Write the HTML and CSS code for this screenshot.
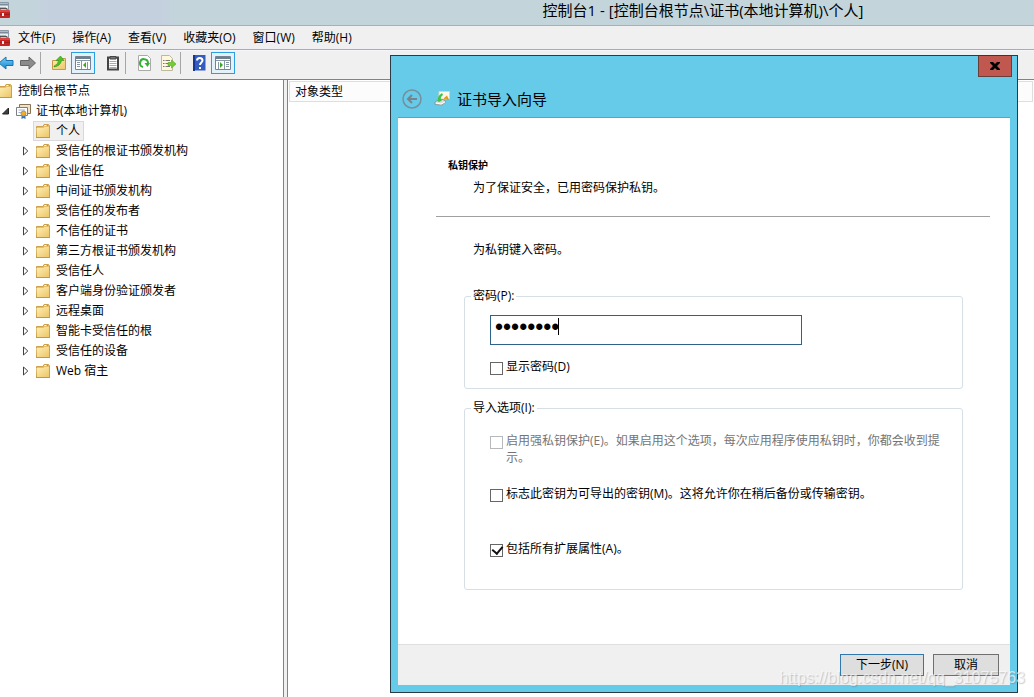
FILE: index.html
```
<!DOCTYPE html>
<html lang="zh-CN">
<head>
<meta charset="utf-8">
<title>控制台1</title>
<link rel="stylesheet" href="styles.css">
</head>
<body>
<svg class="defs" aria-hidden="true">
  <defs>
    <linearGradient id="gold" x1="0" y1="0" x2="1" y2="1"><stop offset="0" stop-color="#fff0b4"/><stop offset="1" stop-color="#ecc569"/></linearGradient>
    <linearGradient id="blue" x1="0" y1="0" x2="0" y2="1"><stop offset="0" stop-color="#7fd0f5"/><stop offset="1" stop-color="#1187d0"/></linearGradient>
    <symbol id="folder" viewBox="0 0 16 16">
      <path d="M1.5 3.5H8L9 1.5H13.5L14.5 3V14.5H1.5Z" fill="#e5bf6c" stroke="#cda04c"/>
      <path d="M9.5 2.5H13" stroke="#fff"/><path d="M11.5 2.5H13" stroke="#6ba5d8"/>
      <path d="M1.5 5H8.5L9.5 4H14V14H2Z" fill="url(#gold)"/>
      <path d="M1 14.5H15" stroke="#c5953f"/>
    </symbol>
    <symbol id="closed" viewBox="0 0 8 10"><path d="M1.5 1V9L5.800 5Z" fill="#fff" stroke="#404040"/></symbol>
    <symbol id="toolbox" viewBox="0 0 16 18">
      <path d="M0 1.5H13.5V9H0" fill="#e9eef2" stroke="#8b98a5"/><path d="M0 3.5H13" stroke="#7c8b99" stroke-width="2"/><path d="M0 6.5H11" stroke="#a9b4bd"/>
      <path d="M5 9V7.5H12V9" fill="none" stroke="#555"/><rect x="0" y="9" width="15" height="8" rx="1" fill="#c62222"/><path d="M0 10H15" stroke="#e76a61"/><path d="M0 13.5H15" stroke="#a51a1a"/><rect x="7" y="12" width="2" height="3" fill="#eee"/>
    </symbol>
    <symbol id="cert" viewBox="0 0 16 16">
      <path d="M4.500 1.500H15.500V10.500H4.500Z" fill="#eee3cf" stroke="#8b7355"/>
      <path d="M1.500 4.500H12.500V12.500H1.500Z" fill="#fff" stroke="#7e7d80"/>
      <path d="M3.500 7H10M3.500 9.500H7" stroke="#8fb4df"/>
      <path d="M6.500 12V16L8.500 15L10.500 16V12" fill="#2873ce"/><circle cx="8.500" cy="10.500" r="2.500" fill="#efae2b" stroke="#d58c1b"/>
    </symbol>
  </defs>
</svg>
<div class="console">
  <header class="titlebar">
    <svg class="appicon" viewBox="0 0 16 18"><use href="#toolbox"/></svg>
    <h1 class="console-title">控制台1 - [控制台根节点\证书(本地计算机)\个人]</h1>
  </header>
  <nav class="menubar">
    <svg class="appicon" viewBox="0 0 16 18"><use href="#toolbox"/></svg>
    <button>文件(F)</button><button>操作(A)</button><button>查看(V)</button><button>收藏夹(O)</button><button>窗口(W)</button><button>帮助(H)</button>
  </nav>
  <div class="toolbar">
    <button class="tool tool-back" aria-label="后退"><svg viewBox="0 0 16 16"><path d="M1 8L8 2V5.500H15V10.500H8V14Z" fill="url(#blue)" stroke="#1874b0"/></svg></button>
    <button class="tool" aria-label="前进"><svg viewBox="0 0 16 16"><path d="M15.500 8L9 2V5.500H.5V10.500H9V14Z" fill="#8b8b8b" stroke="#666"/></svg></button>
    <span class="separator"></span>
    <button class="tool" aria-label="上移一级"><svg viewBox="0 0 16 16"><path d="M1.500 5.500H8L9 3.500H14.500V14.500H1.500Z" fill="url(#gold)" stroke="#c99a45"/><path d="M3 11Q7 10 7.500 5.500H5L9.500 1L13 5.500H10.500Q9.500 11 3 12Z" fill="#4cc223" stroke="#2f8e17" stroke-width=".6"/></svg></button>
    <button class="tool tool-on" aria-label="显示/隐藏控制台树"><svg viewBox="0 0 16 16"><path d="M.5 1.500H15.500V14.500H.5Z" fill="#fff" stroke="#758493"/><path d="M1 3H15" stroke="#71808e" stroke-width="2"/><path d="M1 5.500H15M6.500 6V14M2 7.500H5M2 9.500H5M2 11.500H5M12.500 7V14" stroke="#8998a5"/><path d="M8 10L11 7V13Z" fill="#39a923"/></svg></button>
    <span class="gap"></span>
    <button class="tool" aria-label="剪贴板"><svg viewBox="0 0 16 16"><path d="M3 2.500H13V14.500H3Z" fill="#fff" stroke="#444" stroke-width="2"/><path d="M5 1.500H11V4H5Z" fill="#777" stroke="#444"/><path d="M4.500 6.500H11.500M4.500 8.500H11.500M4.500 10.500H11.500M4.500 12.500H11.500" stroke="#aaa"/></svg></button>
    <span class="separator"></span>
    <button class="tool" aria-label="刷新"><svg viewBox="0 0 16 16"><path d="M2.500.5H11.500L14.500 3.500V15.500H2.500Z" fill="#fff" stroke="#aaa"/><path d="M7 12A4 4 0 1 1 12 8" fill="none" stroke="#36ae38" stroke-width="2"/><path d="M8.500 8H14L11.500 12Z" fill="#36ae38"/></svg></button>
    <button class="tool" aria-label="导出列表"><svg viewBox="0 0 16 16"><path d="M1.500.5H9.500L12.500 3.500V15.500H1.500Z" fill="#fff8dc" stroke="#bdb99f"/><path d="M3 5.500H4.500M5.500 5.500H10M3 8.500H4.500M5.500 8.500H9M3 11.500H4.500M5.500 11.500H10" stroke="#777"/><path d="M8 7.500H11.500V5L16 9L11.500 13V10.500H8Z" fill="#76cc35" stroke="#50a51c" stroke-width=".6"/></svg></button>
    <span class="separator"></span>
    <button class="tool" aria-label="帮助"><svg viewBox="0 0 16 16"><path d="M2 0H14.500V15.500H2Z" fill="#345bc0"/><path d="M2 0H4V16H2Z" fill="#163894"/><path d="M6 5.500C6 2 11.500 2 11.500 5.500C11.500 7.500 9 7.500 9 10M9 12V14" stroke="#fff" stroke-width="2" fill="none"/></svg></button>
    <button class="tool tool-on" aria-label="显示/隐藏操作窗格"><svg viewBox="0 0 16 16"><path d="M.5 1.500H15.500V14.500H.5Z" fill="#fff" stroke="#758493"/><path d="M1 3H15" stroke="#71808e" stroke-width="2"/><path d="M1 5.500H15M9.500 6V14M11 7.500H14M11 9.500H14M11 11.500H14M3.500 7V14" stroke="#8998a5"/><path d="M8 10L5 7V13Z" fill="#39a923"/></svg></button>
  </div>
  <main class="panes">
    <ul class="tree">
      <li class="node root"><svg class="icon"><use href="#folder"/></svg>控制台根节点</li>
      <li class="node store"><svg class="twisty" viewBox="0 0 8 10"><path d="M6.500 2V8H.5Z" fill="#404040" stroke="#222"/></svg><svg class="icon"><use href="#cert"/></svg>证书(本地计算机)</li>
      <li class="node leaf"><span class="selected"><svg class="icon"><use href="#folder"/></svg>个人</span></li>
      <li class="node child"><svg class="twisty"><use href="#closed"/></svg><svg class="icon"><use href="#folder"/></svg>受信任的根证书颁发机构</li>
      <li class="node child"><svg class="twisty"><use href="#closed"/></svg><svg class="icon"><use href="#folder"/></svg>企业信任</li>
      <li class="node child"><svg class="twisty"><use href="#closed"/></svg><svg class="icon"><use href="#folder"/></svg>中间证书颁发机构</li>
      <li class="node child"><svg class="twisty"><use href="#closed"/></svg><svg class="icon"><use href="#folder"/></svg>受信任的发布者</li>
      <li class="node child"><svg class="twisty"><use href="#closed"/></svg><svg class="icon"><use href="#folder"/></svg>不信任的证书</li>
      <li class="node child"><svg class="twisty"><use href="#closed"/></svg><svg class="icon"><use href="#folder"/></svg>第三方根证书颁发机构</li>
      <li class="node child"><svg class="twisty"><use href="#closed"/></svg><svg class="icon"><use href="#folder"/></svg>受信任人</li>
      <li class="node child"><svg class="twisty"><use href="#closed"/></svg><svg class="icon"><use href="#folder"/></svg>客户端身份验证颁发者</li>
      <li class="node child"><svg class="twisty"><use href="#closed"/></svg><svg class="icon"><use href="#folder"/></svg>远程桌面</li>
      <li class="node child"><svg class="twisty"><use href="#closed"/></svg><svg class="icon"><use href="#folder"/></svg>智能卡受信任的根</li>
      <li class="node child"><svg class="twisty"><use href="#closed"/></svg><svg class="icon"><use href="#folder"/></svg>受信任的设备</li>
      <li class="node child"><svg class="twisty"><use href="#closed"/></svg><svg class="icon"><use href="#folder"/></svg>Web 宿主</li>
    </ul>
    <section class="list"><div class="list-head">对象类型</div></section>
  </main>
</div>

<form class="dialog" role="dialog" aria-labelledby="wizard-title">
  <div class="dialog-controls"><button type="button" class="close" aria-label="关闭"><svg viewBox="0 0 10 8"><path d="M0 0H3L5 2L7 0H10V1L7 4L10 7V8H7L5 6L3 8H0V7L3 4L0 1Z"/></svg></button></div>
  <div class="dialog-head">
    <button type="button" class="back" aria-label="上一步"><svg viewBox="0 0 20 20"><circle cx="10" cy="10" r="9" fill="none" stroke="#74909d" stroke-width="1.500"/><path d="M15 10H6M10 6L6 10L10 14" fill="none" stroke="#74858e" stroke-width="2"/></svg></button>
    <svg class="icon" viewBox="0 0 16 16"><path d="M5 .5H15.500V8H5Z" fill="#fff8e8" stroke="#ddd2bd"/><path d="M10 7L13 4.500L15 9H13L12 7.500L10.500 9Z" fill="#df9b18"/><path d="M1 11L5 8.500H9L12 10.500L8 14L1 13.500Z" fill="#d7dddb" stroke="#89918d" stroke-width=".8"/><path d="M2 12L7 13L11 11" stroke="#fff" fill="none"/><path d="M4 10Q3 5 8 2L9 4Q6 6 7 8.500L8 9.500L5 11L2 9.500Z" fill="#3fc247"/></svg>
    <h2 id="wizard-title">证书导入向导</h2>
  </div>
  <div class="page">
    <h3 class="page-title">私钥保护</h3>
    <p class="indent">为了保证安全，已用密码保护私钥。</p>
    <hr>
    <p class="indent">为私钥键入密码。</p>
    <fieldset class="group password-group">
      <legend><label for="password">密码(P):</label></legend>
      <div class="field"><input id="password" class="password" type="password" value="password"><span class="caret"></span></div>
      <label class="option"><input type="checkbox"><span>显示密码(D)</span></label>
    </fieldset>
    <fieldset class="group options-group">
      <legend>导入选项(I):</legend>
      <label class="option disabled"><input type="checkbox" disabled><span>启用强私钥保护(E)。如果启用这个选项，每次应用程序使用私钥时，你都会收到提示。</span></label>
      <label class="option"><input type="checkbox"><span>标志此密钥为可导出的密钥(M)。这将允许你在稍后备份或传输密钥。</span></label>
      <label class="option last"><input type="checkbox" checked><span>包括所有扩展属性(A)。</span></label>
    </fieldset>
  </div>
  <footer class="actions"><button type="button" class="push primary">下一步(N)</button><button type="button" class="push">取消</button></footer>
</form>
<div class="watermark">https://blog.csdn.net/qq_31075763</div>
</body>
</html>
```
FILE: styles.css
```
* { box-sizing: border-box; }
body, h1, h2, h3, p, ul { margin: 0; padding: 0; }
body {
  position: relative;
  overflow: hidden;
  background: #fff;
  color: #000;
  font: 12px/20px "Open Sans", "Noto Sans CJK SC", sans-serif;
}
button, input { font: inherit; color: inherit; }
button { border: 0; padding: 0; background: none; white-space: nowrap; }
svg { display: block; flex: none; }
.defs { position: absolute; width: 0; height: 0; }
.console { display: flex; flex-direction: column; min-height: 100vh; }

.titlebar {
  display: flex;
  align-items: center;
  height: 26px;
  padding-bottom: 5px;
  background: linear-gradient(90deg, #c3d5db 30px, #c5d0df 50px, #c5d0df 160px, #c3d5db 180px);
  border-bottom: 1px solid #a5b0ba;
}
.appicon { width: 16px; height: 18px; margin-left: -5px; }
.console-title { flex: 1; padding-left: 361px; text-align: center; font-size: 15px; font-weight: 400; }
.menubar {
  display: flex;
  align-items: center;
  gap: 17px;
  height: 24px;
  background: #f0f0f0;
  border-bottom: 1px solid #a9aab5;
}
.menubar .appicon { margin-right: -10px; }
.toolbar {
  display: flex;
  align-items: center;
  height: 30px;
  padding-bottom: 5px;
  background: #f0f0f0;
  border-top: 1px solid #f5f6fc;
  border-bottom: 1px solid #81818c;
}
.tool { display: grid; place-items: center; width: 24px; height: 22px; }
.tool svg { width: 16px; height: 16px; }
.tool-back { width: 20px; margin-left: -4px; }
.tool-on { background: #e3f1fb; border: 1px solid #2c9ee2; }
.separator { width: 1px; height: 22px; margin-right: 6px; background: #a6a6a6; }
.gap { width: 6px; }

.panes { display: flex; flex: 1; background: #f0f0f0; }
.tree { flex: 0 0 284px; padding-top: 1px; background: #fff; border-right: 1px solid #81818c; list-style: none; }
.node { display: flex; align-items: center; height: 20px; gap: 5px; }
.icon { width: 16px; height: 16px; }
.twisty { width: 8px; height: 10px; }
.root { margin-left: -3px; }
.store { padding-left: 2px; }
.leaf { padding-left: 33px; }
.child { padding-left: 22px; }
.selected { display: flex; align-items: center; gap: 5px; height: 20px; padding: 0 3px 0 1px; background: #f0f0f0; border: 1px solid #d9d9d9; }
.list { flex: 1; margin-left: 3px; padding: 1px; background: #fff; border-left: 1px solid #81818c; }
.list-head { height: 21px; padding-left: 5px; background: #fcfcfc; border: 1px solid #dedede; }

.dialog {
  position: absolute;
  top: 55px;
  left: 390px;
  right: 16px;
  padding: 0 7px 7px;
  background: #66cae9;
  border: 1px solid #293b44;
}
.dialog-controls { display: flex; justify-content: flex-end; height: 27px; margin-right: -2px; }
.close { display: grid; place-items: center; width: 34px; height: 21px; background: #c1584f; border: 1px solid #663f3b; border-top: 0; }
.close svg { width: 10px; height: 8px; }
.dialog-head { display: flex; align-items: center; height: 35px; padding: 0 0 2px 4px; border-bottom: 1px solid #6e9cb4; }
.dialog-head h2 { margin-left: 7px; font-size: 15px; font-weight: 400; }
.back { width: 20px; height: 20px; margin-right: 12px; }
.page { padding: 37px 47px 54px 66px; background: #fff; }
.page-title { margin-left: -16px; font-size: 10px; font-weight: 700; }
.indent { margin: 3px 0 0 9px; }
hr { height: 1px; margin: 18px -27px 23px -28px; border: 0; background: #a0a0a0; }
.group { min-width: 0; margin: 0; border: 1px solid #d5dfe5; border-radius: 3px; }
legend { margin-left: -19px; padding: 0 2px; line-height: 16px; }
.password-group { margin-top: 28px; padding: 11px 11px 13px 25px; }
.options-group { margin-top: 11px; padding: 16px 11px 32px 25px; }
.field { position: relative; max-width: 312px; margin-bottom: 13px; }
.password { display: block; width: 100%; height: 30px; padding: 0 4px 6px; border: 1px solid #2d628b; border-radius: 0; outline: 0; background: #fff; font: 23px/22px "Liberation Sans", sans-serif; }
.caret { position: absolute; top: 3px; left: 68px; width: 1px; height: 17px; background: #000; }
.option { display: flex; align-items: flex-start; gap: 3px; line-height: 17px; }
.option input { appearance: none; flex: none; display: grid; place-items: center; width: 13px; height: 13px; margin: 4px 0 0; border: 1px solid #666; background: #fff; }
.option input:checked::after { content: ""; width: 5px; height: 8px; margin: -3px 0 0 1px; border: solid #111; border-width: 0 2px 2px 0; transform: rotate(40deg); }
.option + .option { margin-top: 19px; }
.option + .last { margin-top: 38px; }
.disabled { color: #757575; }
.disabled input { border-color: #b5b9bb; }
.actions { display: flex; justify-content: flex-end; gap: 9px; padding: 9px 11px 9px; background: #f0f0f0; border-top: 1px solid #dfdfdf; }
.push { width: 66px; height: 22px; line-height: 18px; background: #dedede; border: 1px solid #707070; }
.primary { width: 84px; border-color: #3179ad; }
.watermark { position: absolute; right: 9px; top: 668px; font: 16px/20px "Liberation Sans", sans-serif; color: rgba(255, 255, 255, .65); text-shadow: 1px 1px 1px rgba(110, 110, 110, .35); pointer-events: none; }
```
